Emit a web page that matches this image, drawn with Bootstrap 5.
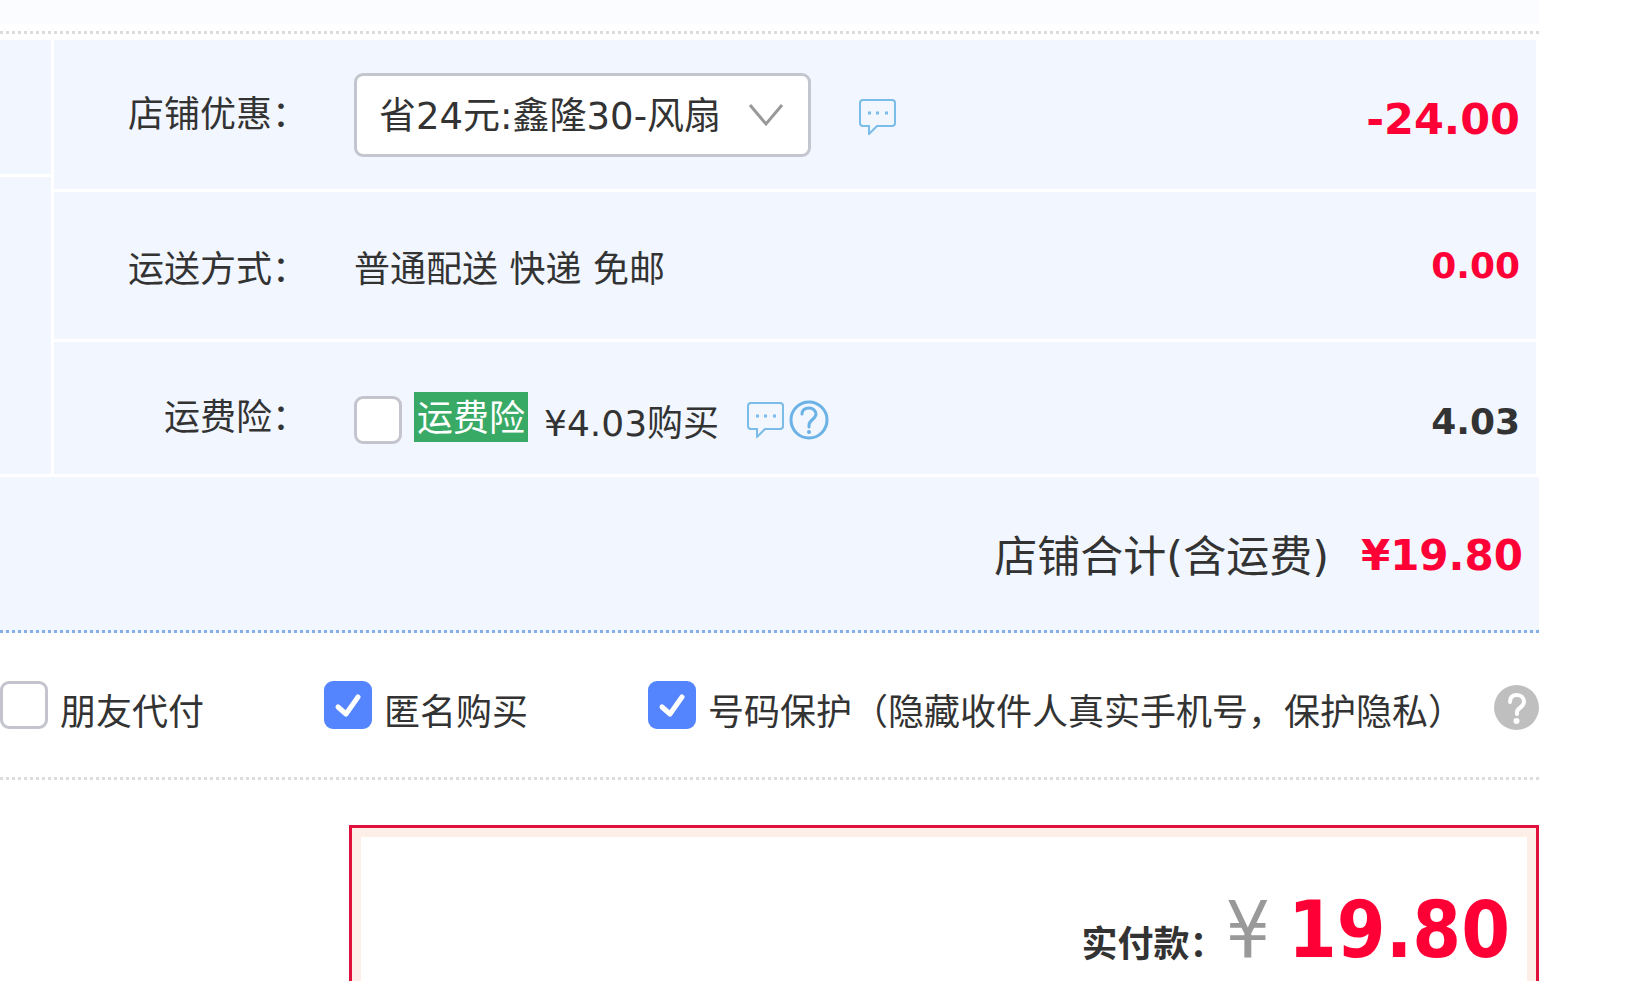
<!DOCTYPE html>
<html lang="zh-CN">
<head>
<meta charset="utf-8">
<meta name="viewport" content="width=device-width, initial-scale=1">
<title>确认订单</title>
<link href="https://cdn.jsdelivr.net/npm/bootstrap@5.3.0/dist/css/bootstrap.min.css" rel="stylesheet">
<style>
  body { font-family: "DejaVu Sans", "Noto Sans CJK SC", sans-serif; font-size: 36px; line-height: 48px; color: #333; background: #fff; }
  .order-page { padding-right: 110px; }
  .top-strip { height: 34px; background: #fbfcff; background-clip: padding-box; border-bottom: 3px dotted #dcdcdc; box-shadow: inset 0 -7px 0 #fff; margin-bottom: 6px; }
  .cell { background: #f1f6ff; }
  .split { gap: 3px; margin: 0 3px 3px 0; }
  .side { width: 51px; gap: 3px; }
  .side-top { height: 134px; }
  .line-list { gap: 3px; min-width: 0; }
  .line-item { padding-right: 16px; }
  .line-discount { height: 149px; }
  .line-ship { height: 147px; }
  .line-insure { height: 132px; padding-top: 24px; }
  .line-name { width: 254px; margin-right: 46px; text-align: right; flex: none; white-space: nowrap; }
  .coupon { width: 457px; height: 84px; padding: 4px 60px 0 22px; font-size: 37px; color: #333; border: 3px solid #c4c6cf; border-radius: 9px;
    background-image: url("data:image/svg+xml,%3csvg xmlns='http://www.w3.org/2000/svg' viewBox='0 0 36 24'%3e%3cpath d='M2 2l16 19L34 2' fill='none' stroke='%23999' stroke-width='3'/%3e%3c/svg%3e");
    background-size: 36px 24px; background-position: right 24px center; }
  .plain-btn { padding: 0; border: 0; background: none; line-height: 0; flex: none; }
  .amount { font-weight: 700; white-space: nowrap; }
  .amount-lg { font-size: 43px; }
  .red { color: #ff0036; }
  .tag { background: #38aa66; color: #fff; width: 114px; height: 50px; text-align: center; line-height: 54px; margin: 0 16px 6px 12px; }
  .tick.form-check-input { width: 48px; height: 48px; margin: 0; border: 3px solid #c4c4cf; border-radius: 9px; flex: none; background-color: #fff; }
  .tick.form-check-input:checked { background-color: #5584ff; border-color: #5584ff; background-size: 48px 48px; background-position: center;
    background-image: url("data:image/svg+xml,%3csvg xmlns='http://www.w3.org/2000/svg' viewBox='0 0 48 48'%3e%3cpath d='M14 26l8 7L34 16' fill='none' stroke='%23fff' stroke-width='5' stroke-linecap='round' stroke-linejoin='round'/%3e%3c/svg%3e"); }
  .total { height: 156px; padding-right: 16px; font-size: 42px; border-bottom: 3px dotted #86aee6; }
  .total-name { font-size: 43px; margin-right: 32px; padding-top: 6px; }
  .options { height: 147px; border-bottom: 3px dotted #dcdcdc; display: grid; grid-template-columns: 324px 324px 1fr auto; align-items: center; }
  .opt { gap: 12px; white-space: nowrap; }
  .opt label { padding-top: 16px; }
  .pay { margin: 45px 0 0 349px; border: 3px solid #e0103a; border-bottom: 0; box-shadow: inset 9px 9px 0 #fdeee8, inset -9px 0 0 #fdeee8; padding: 52px 26px 0 0; }
  .pay-sum { font-family: "DejaVu Sans Condensed", "DejaVu Sans", sans-serif; font-size: 78px; line-height: 100px; }
  .yen { color: #999; margin-right: 18px; }
</style>
</head>
<body>
<main class="order-page d-flex flex-column min-vh-100">
  <div class="top-strip"></div>

  <section class="split d-flex">
    <div class="side d-flex flex-column flex-shrink-0">
      <div class="cell side-top"></div>
      <div class="cell flex-grow-1"></div>
    </div>
    <div class="line-list d-flex flex-column flex-grow-1">
      <div class="cell line-item line-discount d-flex align-items-center">
        <label class="line-name" for="coupon">店铺优惠：</label>
        <select class="form-select coupon" id="coupon"><option>省24元:鑫隆30-风扇</option></select>
        <button class="plain-btn ms-5 pt-1" type="button" aria-label="留言">
          <svg width="38" height="36" viewBox="0 0 38 36" fill="none" stroke="#7cbce8" stroke-width="2"><path d="M4 1h29a3 3 0 0 1 3 3v20a3 3 0 0 1-3 3H18l-8 8v-8H4a3 3 0 0 1-3-3V4a3 3 0 0 1 3-3z"/><path d="M9 14h3M17 14h3M26 14h3" stroke-width="3"/></svg>
        </button>
        <span class="amount amount-lg red ms-auto pt-2">-24.00</span>
      </div>
      <div class="cell line-item line-ship d-flex align-items-center">
        <span class="line-name pt-2">运送方式：</span>
        <span class="pt-2">普通配送 快递 免邮</span>
        <span class="amount red ms-auto">0.00</span>
      </div>
      <div class="cell line-item line-insure d-flex align-items-center">
        <span class="line-name pb-1">运费险：</span>
        <input class="form-check-input tick" type="checkbox" id="insure">
        <label class="d-flex align-items-center" for="insure"><span class="tag">运费险</span><span class="pt-2">¥4.03购买</span></label>
        <button class="plain-btn ms-4 ps-1" type="button" aria-label="留言">
          <svg width="38" height="36" viewBox="0 0 38 36" fill="none" stroke="#7cbce8" stroke-width="2"><path d="M4 1h29a3 3 0 0 1 3 3v20a3 3 0 0 1-3 3H18l-8 8v-8H4a3 3 0 0 1-3-3V4a3 3 0 0 1 3-3z"/><path d="M9 14h3M17 14h3M26 14h3" stroke-width="3"/></svg>
        </button>
        <button class="plain-btn ms-1" type="button" aria-label="帮助">
          <svg width="40" height="40" viewBox="0 0 40 40" fill="none" stroke="#6bb2e6" stroke-width="3"><circle cx="20" cy="20" r="18"/><path d="M13 14c0-4 3-6 7-6s7 3 7 6c0 5-7 6-7 11v2" stroke-linecap="round"/><circle cx="20" cy="32" r="2" fill="#6bb2e6" stroke="none"/></svg>
        </button>
        <span class="amount ms-auto pt-1">4.03</span>
      </div>
    </div>
  </section>

  <section class="cell total d-flex justify-content-end align-items-center">
    <span class="total-name">店铺合计(含运费)</span>
    <span class="amount red pt-1">¥19.80</span>
  </section>

  <section class="options">
    <div class="opt d-flex align-items-center"><input class="form-check-input tick" type="checkbox" id="friend"><label for="friend">朋友代付</label></div>
    <div class="opt d-flex align-items-center"><input class="form-check-input tick" type="checkbox" id="anon" checked><label for="anon">匿名购买</label></div>
    <div class="opt d-flex align-items-center"><input class="form-check-input tick" type="checkbox" id="protect" checked><label for="protect">号码保护（隐藏收件人真实手机号，保护隐私）</label></div>
    <button class="plain-btn pt-1" type="button" aria-label="说明">
      <svg width="45" height="45" viewBox="0 0 45 45" fill="none"><circle cx="22.5" cy="22.5" r="22.5" fill="#bfbfbf"/><path d="M16 17c0-5 3-7 7-7s7 3 7 7c0 5-7 6-7 10v2" stroke="#fff" stroke-width="4" stroke-linecap="round"/><circle cx="22.5" cy="36" r="3" fill="#fff"/></svg>
    </button>
  </section>

  <section class="pay flex-grow-1">
    <div class="d-flex justify-content-end align-items-baseline">
      <strong>实付款：</strong>
      <span class="pay-sum yen">¥</span>
      <strong class="pay-sum red">19.80</strong>
    </div>
  </section>
</main>
<script src="https://cdn.jsdelivr.net/npm/bootstrap@5.3.0/dist/js/bootstrap.bundle.min.js"></script>
</body>
</html>
